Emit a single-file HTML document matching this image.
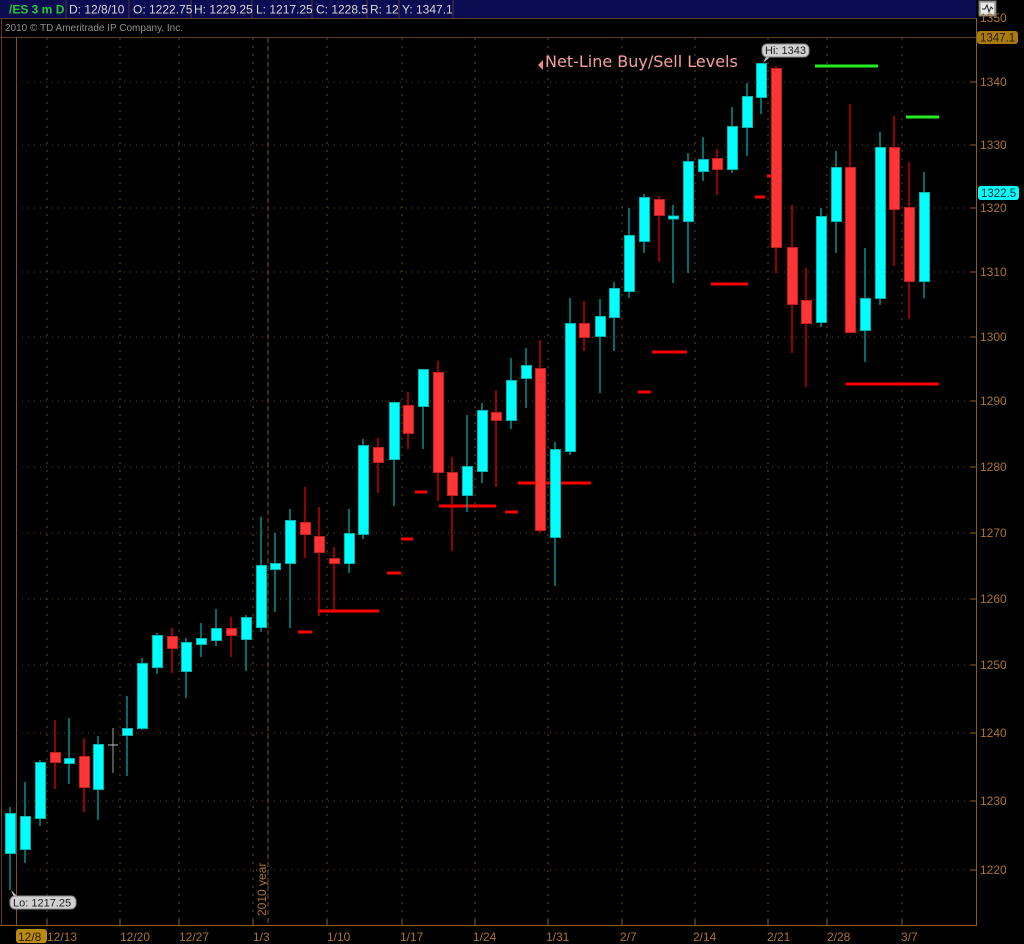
<!DOCTYPE html>
<html><head><meta charset="utf-8"><style>
html,body{margin:0;padding:0;background:#000;}
svg{display:block;}
text{font-family:"Liberation Sans","DejaVu Sans",sans-serif;}
.u{fill:#00ffff;stroke:#00b4b4;stroke-width:1}
.d{fill:#ff3535;stroke:#c02020;stroke-width:1}
.uw{stroke:#00a8a8;stroke-width:1.3}
.dw{stroke:#e00000;stroke-width:1.3}
.g{stroke:#6a4818;stroke-width:1;stroke-dasharray:1 5}
.ax{fill:#a87430;font-size:12px}
.nl{stroke:#ff0000;stroke-width:3}
</style></head><body>
<svg width="1024" height="944" viewBox="0 0 1024 944" xmlns="http://www.w3.org/2000/svg">
<rect width="1024" height="944" fill="#000"/>
<rect x="0" y="0" width="976" height="18" fill="#0c0c52"/>
<g stroke="#4a3a3a" stroke-width="1">
<line x1="66" y1="0" x2="66" y2="18"/><line x1="129" y1="0" x2="129" y2="18"/><line x1="191" y1="0" x2="191" y2="18"/><line x1="252" y1="0" x2="252" y2="18"/><line x1="312" y1="0" x2="312" y2="18"/><line x1="367" y1="0" x2="367" y2="18"/><line x1="399" y1="0" x2="399" y2="18"/><line x1="453" y1="0" x2="453" y2="18"/>
</g>
<g font-size="12" fill="#d8d8d8">
<text x="9" y="13.5" fill="#22cc33" font-weight="bold">/ES 3 m D</text>
<text x="69" y="13.5">D: 12/8/10</text>
<text x="133" y="13.5">O: 1222.75</text>
<text x="194" y="13.5">H: 1229.25</text>
<text x="256" y="13.5">L: 1217.25</text>
<text x="316" y="13.5">C: 1228.5</text>
<text x="370" y="13.5">R: 12</text>
<text x="402" y="13.5">Y: 1347.1</text>
</g>
<line x1="0" y1="18.5" x2="976" y2="18.5" stroke="#5a4020"/>
<text x="5" y="31" font-size="10" fill="#909090">2010 © TD Ameritrade IP Company, Inc.</text>
<line x1="0" y1="37.5" x2="976" y2="37.5" stroke="#5a4020"/>
<rect x="979" y="1" width="17" height="15" fill="#b0b0b0" stroke="#707070"/>
<rect x="981" y="3" width="13" height="11" fill="#e8e8e8"/>
<path d="M982 9 L985 9 L987 5 L989 12 L991 7 L993 9" stroke="#222" fill="none" stroke-width="1"/>
<line x1="1.5" y1="18" x2="1.5" y2="926" stroke="#5a4020"/>
<line x1="16.5" y1="37" x2="16.5" y2="926" stroke="#7a5520"/>
<line x1="976.5" y1="18" x2="976.5" y2="926" stroke="#8a6020"/>
<line x1="0" y1="925.5" x2="977" y2="925.5" stroke="#8a6020"/>
<g class="g">
<line x1="16" y1="82" x2="976" y2="82"/><line x1="16" y1="145" x2="976" y2="145"/><line x1="16" y1="208" x2="976" y2="208"/><line x1="16" y1="272" x2="976" y2="272"/><line x1="16" y1="337" x2="976" y2="337"/><line x1="16" y1="401" x2="976" y2="401"/><line x1="16" y1="467" x2="976" y2="467"/><line x1="16" y1="533" x2="976" y2="533"/><line x1="16" y1="599" x2="976" y2="599"/><line x1="16" y1="665" x2="976" y2="665"/><line x1="16" y1="733" x2="976" y2="733"/><line x1="16" y1="801" x2="976" y2="801"/><line x1="16" y1="870" x2="976" y2="870"/>
</g>
<g class="g" style="stroke-dasharray:2 6">
<line x1="47" y1="38" x2="47" y2="925"/><line x1="120" y1="38" x2="120" y2="925"/><line x1="179" y1="38" x2="179" y2="925"/><line x1="253" y1="38" x2="253" y2="925"/><line x1="327" y1="38" x2="327" y2="925"/><line x1="402" y1="38" x2="402" y2="925"/><line x1="475" y1="38" x2="475" y2="925"/><line x1="548" y1="38" x2="548" y2="925"/><line x1="622" y1="38" x2="622" y2="925"/><line x1="695" y1="38" x2="695" y2="925"/><line x1="768" y1="38" x2="768" y2="925"/><line x1="827" y1="38" x2="827" y2="925"/><line x1="902" y1="38" x2="902" y2="925"/>
</g>
<line x1="268" y1="38" x2="268" y2="925" stroke="#7a5520" stroke-dasharray="5 3"/>
<text transform="translate(266,916) rotate(-90)" font-size="12" fill="#a87430">2010 year</text>
<g stroke="#8a6020"><line x1="47" y1="920" x2="47" y2="926"/><line x1="120" y1="920" x2="120" y2="926"/><line x1="179" y1="920" x2="179" y2="926"/><line x1="253" y1="920" x2="253" y2="926"/><line x1="327" y1="920" x2="327" y2="926"/><line x1="402" y1="920" x2="402" y2="926"/><line x1="475" y1="920" x2="475" y2="926"/><line x1="548" y1="920" x2="548" y2="926"/><line x1="622" y1="920" x2="622" y2="926"/><line x1="695" y1="920" x2="695" y2="926"/><line x1="768" y1="920" x2="768" y2="926"/><line x1="827" y1="920" x2="827" y2="926"/><line x1="902" y1="920" x2="902" y2="926"/></g>
<rect x="16" y="929" width="31" height="14" rx="3" fill="#b88a10"/>
<g class="ax">
<text x="18" y="941" fill="#2a1a00">12/8</text>
<text x="47" y="941">12/13</text><text x="120" y="941">12/20</text><text x="179" y="941">12/27</text><text x="253" y="941">1/3</text><text x="327" y="941">1/10</text><text x="400" y="941">1/17</text><text x="473" y="941">1/24</text><text x="546" y="941">1/31</text><text x="620" y="941">2/7</text><text x="693" y="941">2/14</text><text x="767" y="941">2/21</text><text x="827" y="941">2/28</text><text x="901" y="941">3/7</text>
</g>
<g stroke="#8a6020"><line x1="970" y1="82" x2="976" y2="82"/><line x1="970" y1="145" x2="976" y2="145"/><line x1="970" y1="208" x2="976" y2="208"/><line x1="970" y1="272" x2="976" y2="272"/><line x1="970" y1="337" x2="976" y2="337"/><line x1="970" y1="401" x2="976" y2="401"/><line x1="970" y1="467" x2="976" y2="467"/><line x1="970" y1="533" x2="976" y2="533"/><line x1="970" y1="599" x2="976" y2="599"/><line x1="970" y1="665" x2="976" y2="665"/><line x1="970" y1="733" x2="976" y2="733"/><line x1="970" y1="801" x2="976" y2="801"/><line x1="970" y1="870" x2="976" y2="870"/></g>
<g class="ax">
<text x="980" y="22">1350</text>
<text x="980" y="86">1340</text><text x="980" y="149">1330</text><text x="980" y="212">1320</text><text x="980" y="276">1310</text><text x="980" y="341">1300</text><text x="980" y="405">1290</text><text x="980" y="471">1280</text><text x="980" y="537">1270</text><text x="980" y="603">1260</text><text x="980" y="669">1250</text><text x="980" y="737">1240</text><text x="980" y="805">1230</text><text x="980" y="874">1220</text>
</g>
<rect x="977" y="31" width="41" height="13" rx="3" fill="#a87a10"/>
<text x="980" y="41.5" font-size="11.5" fill="#2a1a00">1347.1</text>
<rect x="978" y="186" width="41" height="14" rx="3" fill="#00ffff"/>
<text x="981" y="197" font-size="11.5" fill="#002a2a">1322.5</text>
<g class="nl">
<line x1="298" y1="632" x2="312" y2="632"/><line x1="318" y1="611" x2="379" y2="611"/><line x1="387" y1="573" x2="401" y2="573"/><line x1="401" y1="539" x2="413" y2="539"/><line x1="415" y1="492" x2="427" y2="492"/><line x1="439" y1="506" x2="496" y2="506"/><line x1="505" y1="512" x2="518" y2="512"/><line x1="518" y1="483" x2="591" y2="483"/><line x1="638" y1="392" x2="651" y2="392"/><line x1="652" y1="352" x2="687" y2="352"/><line x1="711" y1="284" x2="748" y2="284"/><line x1="755" y1="197" x2="765" y2="197"/><line x1="767" y1="176" x2="772" y2="176"/><line x1="846" y1="384" x2="939" y2="384"/>
<line x1="815" y1="66" x2="878" y2="66" style="stroke:#22ee22"/><line x1="906" y1="117" x2="939" y2="117" style="stroke:#22ee22"/>
</g>
<g class="uw">
<line x1="10" y1="807" x2="10" y2="890"/><line x1="25" y1="782" x2="25" y2="863"/><line x1="40" y1="760" x2="40" y2="826"/><line x1="69" y1="718" x2="69" y2="784"/><line x1="98" y1="736" x2="98" y2="820"/><line x1="127" y1="696" x2="127" y2="776"/><line x1="142" y1="658" x2="142" y2="730"/><line x1="157" y1="633" x2="157" y2="674"/><line x1="186" y1="638" x2="186" y2="698"/><line x1="201" y1="623" x2="201" y2="657"/><line x1="216" y1="609" x2="216" y2="646"/><line x1="246" y1="615" x2="246" y2="671"/><line x1="261" y1="517" x2="261" y2="632"/><line x1="275" y1="533" x2="275" y2="612"/><line x1="290" y1="509" x2="290" y2="628"/><line x1="349" y1="509" x2="349" y2="573"/><line x1="363" y1="439" x2="363" y2="539"/><line x1="394" y1="402" x2="394" y2="506"/><line x1="423" y1="369" x2="423" y2="449"/><line x1="467" y1="415" x2="467" y2="512"/><line x1="482" y1="403" x2="482" y2="483"/><line x1="511" y1="358" x2="511" y2="429"/><line x1="526" y1="348" x2="526" y2="408"/><line x1="555" y1="442" x2="555" y2="586"/><line x1="570" y1="298" x2="570" y2="455"/><line x1="600" y1="299" x2="600" y2="393"/><line x1="614" y1="282" x2="614" y2="351"/><line x1="629" y1="208" x2="629" y2="298"/><line x1="644" y1="194" x2="644" y2="253"/><line x1="673" y1="205" x2="673" y2="283"/><line x1="688" y1="153" x2="688" y2="273"/><line x1="703" y1="137" x2="703" y2="181"/><line x1="732" y1="107" x2="732" y2="173"/><line x1="747" y1="83" x2="747" y2="156"/><line x1="761" y1="63" x2="761" y2="114"/><line x1="821" y1="208" x2="821" y2="327"/><line x1="836" y1="151" x2="836" y2="253"/><line x1="865" y1="248" x2="865" y2="362"/><line x1="880" y1="132" x2="880" y2="305"/><line x1="924" y1="172" x2="924" y2="298"/>
</g>
<g class="dw">
<line x1="55" y1="720" x2="55" y2="789"/><line x1="84" y1="738" x2="84" y2="812"/><line x1="172" y1="628" x2="172" y2="673"/><line x1="231" y1="617" x2="231" y2="657"/><line x1="305" y1="487" x2="305" y2="558"/><line x1="319" y1="507" x2="319" y2="616"/><line x1="334" y1="547" x2="334" y2="613"/><line x1="378" y1="438" x2="378" y2="493"/><line x1="408" y1="392" x2="408" y2="449"/><line x1="438" y1="361" x2="438" y2="501"/><line x1="452" y1="457" x2="452" y2="551"/><line x1="496" y1="390" x2="496" y2="487"/><line x1="540" y1="340" x2="540" y2="533"/><line x1="584" y1="301" x2="584" y2="351"/><line x1="659" y1="196" x2="659" y2="262"/><line x1="717" y1="149" x2="717" y2="195"/><line x1="776" y1="66" x2="776" y2="273"/><line x1="792" y1="205" x2="792" y2="353"/><line x1="806" y1="268" x2="806" y2="387"/><line x1="850" y1="104" x2="850" y2="332"/><line x1="894" y1="116" x2="894" y2="266"/><line x1="909" y1="162" x2="909" y2="319"/>
</g>
<line x1="113" y1="728" x2="113" y2="773" stroke="#a0a0a0"/>
<line x1="108" y1="745" x2="118" y2="745" stroke="#c0c0c0"/>
<g class="u">
<rect x="5.5" y="813.5" width="10" height="40"/><rect x="20.5" y="816.5" width="10" height="33"/><rect x="35.5" y="762.5" width="10" height="56"/><rect x="64.5" y="758.5" width="10" height="5"/><rect x="93.5" y="744.5" width="10" height="45"/><rect x="122.5" y="728.5" width="10" height="7"/><rect x="137.5" y="663.5" width="10" height="65"/><rect x="152.5" y="635.5" width="10" height="32"/><rect x="181.5" y="642.5" width="10" height="29"/><rect x="196.5" y="638.5" width="10" height="6"/><rect x="211.5" y="628.5" width="10" height="12"/><rect x="241.5" y="617.5" width="10" height="22"/><rect x="256.5" y="565.5" width="10" height="62"/><rect x="270.5" y="563.5" width="10" height="6"/><rect x="285.5" y="520.5" width="10" height="43"/><rect x="344.5" y="533.5" width="10" height="30"/><rect x="358.5" y="445.5" width="10" height="89"/><rect x="389.5" y="402.5" width="10" height="57"/><rect x="418.5" y="369.5" width="10" height="37"/><rect x="462.5" y="466.5" width="10" height="29"/><rect x="477.5" y="410.5" width="10" height="61"/><rect x="506.5" y="380.5" width="10" height="40"/><rect x="521.5" y="365.5" width="10" height="13"/><rect x="550.5" y="449.5" width="10" height="88"/><rect x="565.5" y="323.5" width="10" height="128"/><rect x="595.5" y="316.5" width="10" height="20"/><rect x="609.5" y="288.5" width="10" height="29"/><rect x="624.5" y="235.5" width="10" height="56"/><rect x="639.5" y="197.5" width="10" height="44"/><rect x="668.5" y="216" width="10" height="3"/><rect x="683.5" y="161.5" width="10" height="60"/><rect x="698.5" y="159.5" width="10" height="12"/><rect x="727.5" y="126.5" width="10" height="43"/><rect x="742.5" y="96.5" width="10" height="31"/><rect x="756.5" y="63.5" width="10" height="34"/><rect x="816.5" y="216.5" width="10" height="106"/><rect x="831.5" y="167.5" width="10" height="54"/><rect x="860.5" y="298.5" width="10" height="32"/><rect x="875.5" y="147.5" width="10" height="151"/><rect x="919.5" y="192.5" width="10" height="89"/>
</g>
<g class="d">
<rect x="50.5" y="752.5" width="10" height="10"/><rect x="79.5" y="756.5" width="10" height="31"/><rect x="167.5" y="636.5" width="10" height="12"/><rect x="226.5" y="628.5" width="10" height="7"/><rect x="300.5" y="522.5" width="10" height="12"/><rect x="314.5" y="536.5" width="10" height="16"/><rect x="329.5" y="558.5" width="10" height="5"/><rect x="373.5" y="447.5" width="10" height="15"/><rect x="403.5" y="405.5" width="10" height="28"/><rect x="433.5" y="372.5" width="10" height="100"/><rect x="447.5" y="472.5" width="10" height="23"/><rect x="491.5" y="412.5" width="10" height="8"/><rect x="535.5" y="368.5" width="10" height="162"/><rect x="579.5" y="323.5" width="10" height="14"/><rect x="654.5" y="199.5" width="10" height="16"/><rect x="712.5" y="158.5" width="10" height="11"/><rect x="771.5" y="68.5" width="10" height="179"/><rect x="787.5" y="247.5" width="10" height="57"/><rect x="801.5" y="300.5" width="10" height="23"/><rect x="845.5" y="167.5" width="10" height="165"/><rect x="889.5" y="147.5" width="10" height="62"/><rect x="904.5" y="207.5" width="10" height="74"/>
</g>
<path d="M766 57 L763 63 L770 57 Z" fill="#c8c8c8"/>
<rect x="762" y="44" width="47" height="13" rx="5" fill="#d0d0d0" stroke="#888"/>
<text x="765" y="54" font-size="11" fill="#222">Hi: 1343</text>
<path d="M11 890 L14 897 L18 897 Z" fill="#c8c8c8"/>
<rect x="10" y="896" width="66" height="13" rx="5" fill="#d0d0d0" stroke="#888"/>
<text x="13" y="906.5" font-size="11" fill="#222">Lo: 1217.25</text>
<path d="M538 65 L543 60 L543 70 Z" fill="#f08888"/>
<text x="545" y="67" font-size="16" fill="#f5a0a0" style="font-family:'DejaVu Sans',sans-serif">Net-Line Buy/Sell Levels</text>
</svg>
</body></html>
